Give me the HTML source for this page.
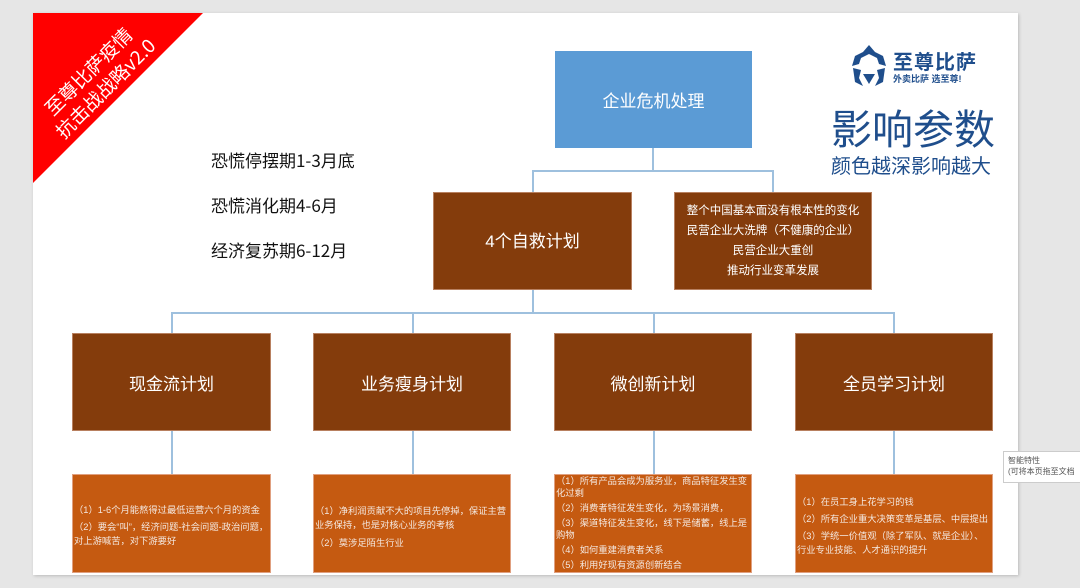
<!DOCTYPE html>
<html><head><meta charset="utf-8"><style>
*{margin:0;padding:0;box-sizing:border-box}
body{width:1080px;height:588px;background:#e6e6e6;position:relative;overflow:hidden;font-family:"Liberation Sans","Noto Sans CJK SC",sans-serif}
.slide{position:absolute;left:33px;top:13px;width:985px;height:562px;background:#fff;box-shadow:1px 1px 3px #bbb}
.b{position:absolute;display:flex;align-items:center;justify-content:center;color:#fff;text-align:center}
.br{background:#843c0c;border:1px solid #b88060}
.or{background:#c55a11;border:1px solid #e0a080;color:#f4e8e0;font-size:9.3px;line-height:14px;text-align:left;justify-content:flex-start;flex-direction:column;align-items:stretch;padding:0 1px}
.l{position:absolute;background:#9ec0de}
.t{position:absolute;font-size:17px;color:#111;font-family:"Noto Sans CJK SC",sans-serif}
</style></head><body>
<div class="slide"></div>
<svg style="position:absolute;left:33px;top:13px" width="171" height="171"><polygon points="0,0 170,0 0,170" fill="#ff0000"/></svg>
<div style="position:absolute;left:17px;top:56px;width:160px;transform:rotate(-45deg);color:#fff;font-size:19px;line-height:24px;text-align:center;font-family:'Noto Sans CJK SC',sans-serif">至尊比萨疫情<br>抗击战战略v2.0</div>

<div class="t" style="left:211px;top:147px">恐慌停摆期1-3月底</div>
<div class="t" style="left:211px;top:192px">恐慌消化期4-6月</div>
<div class="t" style="left:211px;top:237px">经济复苏期6-12月</div>

<svg style="position:absolute;left:849px;top:44px" width="40" height="46" viewBox="0 0 40 46">
<path d="M20 1 L26 8 L34 12 L37 22 L30 20 L28 14 L20 10 L12 14 L10 20 L3 22 L6 12 L14 8 Z" fill="#1f4e8c"/>
<path d="M4 24 L12 26 L10 34 L14 42 L6 38 Z M36 24 L28 26 L30 34 L26 42 L34 38 Z M14 30 L26 30 L20 40 Z" fill="#1f4e8c"/>
</svg>
<div style="position:absolute;left:893px;top:46px;color:#1f4e8c;font-size:20px;font-weight:bold;letter-spacing:1px">至尊比萨</div>
<div style="position:absolute;left:893px;top:72px;color:#1f4e8c;font-size:9px;font-weight:bold">外卖比萨 选至尊!</div>
<div style="position:absolute;left:831px;top:102px;color:#1f4e8c;font-size:41px;line-height:48px;font-family:'Noto Sans CJK SC',sans-serif">影响参数</div>
<div style="position:absolute;left:831px;top:152px;color:#1f4e8c;font-size:20px;line-height:26px;font-family:'Noto Sans CJK SC',sans-serif">颜色越深影响越大</div>

<div class="l" style="left:652px;top:148px;width:2px;height:23px"></div>
<div class="l" style="left:532px;top:170px;width:242px;height:2px"></div>
<div class="l" style="left:532px;top:170px;width:2px;height:22px"></div>
<div class="l" style="left:772px;top:170px;width:2px;height:22px"></div>
<div class="l" style="left:532px;top:290px;width:2px;height:23px"></div>
<div class="l" style="left:171px;top:312px;width:724px;height:2px"></div>
<div class="l" style="left:171px;top:312px;width:2px;height:21px"></div>
<div class="l" style="left:412px;top:312px;width:2px;height:21px"></div>
<div class="l" style="left:653px;top:312px;width:2px;height:21px"></div>
<div class="l" style="left:893px;top:312px;width:2px;height:21px"></div>
<div class="l" style="left:171px;top:431px;width:2px;height:43px"></div>
<div class="l" style="left:412px;top:431px;width:2px;height:43px"></div>
<div class="l" style="left:653px;top:431px;width:2px;height:43px"></div>
<div class="l" style="left:893px;top:431px;width:2px;height:43px"></div>

<div class="b" style="left:555px;top:51px;width:197px;height:97px;background:#5b9bd5;font-size:17px">企业危机处理</div>
<div class="b br" style="left:433px;top:192px;width:199px;height:98px;font-size:17px;padding-bottom:4px">4个自救计划</div>
<div class="b br" style="left:674px;top:192px;width:198px;height:98px;font-size:11.5px;line-height:20px;flex-direction:column">整个中国基本面没有根本性的变化<br>民营企业大洗牌（不健康的企业）<br>民营企业大重创<br>推动行业变革发展</div>

<div class="b br" style="left:72px;top:333px;width:199px;height:98px;font-size:17px">现金流计划</div>
<div class="b br" style="left:313px;top:333px;width:198px;height:98px;font-size:17px">业务瘦身计划</div>
<div class="b br" style="left:554px;top:333px;width:198px;height:98px;font-size:17px">微创新计划</div>
<div class="b br" style="left:795px;top:333px;width:198px;height:98px;font-size:17px">全员学习计划</div>

<div class="b or" style="left:72px;top:474px;width:199px;height:99px;padding-top:28px">
<div>（1）1-6个月能熬得过最低运营六个月的资金</div><div style="margin-top:3px">（2）要会“叫”，经济问题-社会问题-政治问题，对上游喊苦，对下游要好</div></div>
<div class="b or" style="left:313px;top:474px;width:198px;height:99px;padding-top:29px">
<div>（1）净利润贡献不大的项目先停掉，保证主营业务保持，也是对核心业务的考核</div><div style="margin-top:4px">（2）莫涉足陌生行业</div></div>
<div class="b or" style="left:554px;top:474px;width:198px;height:99px;padding-top:0;line-height:12px">
<div>（1）所有产品会成为服务业，商品特征发生变化过剩</div><div style="margin-top:3px">（2）消费者特征发生变化，为场景消费，</div><div style="margin-top:3px">（3）渠道特征发生变化，线下是储蓄，线上是购物</div><div style="margin-top:3px">（4）如何重建消费者关系</div><div style="margin-top:3px">（5）利用好现有资源创新结合</div></div>
<div class="b or" style="left:795px;top:474px;width:198px;height:99px;padding-top:20px">
<div>（1）在员工身上花学习的钱</div><div style="margin-top:3px">（2）所有企业重大决策变革是基层、中层提出</div><div style="margin-top:3px">（3）学统一价值观（除了军队、就是企业）、行业专业技能、人才通识的提升</div></div>

<div style="position:absolute;left:1003px;top:451px;width:80px;height:32px;background:#fff;border:1px solid #ccc;font-size:8px;color:#555;padding:3px 4px;line-height:11px;white-space:nowrap;overflow:hidden">智能特性<br>(可将本页拖至文档</div>
</body></html>
